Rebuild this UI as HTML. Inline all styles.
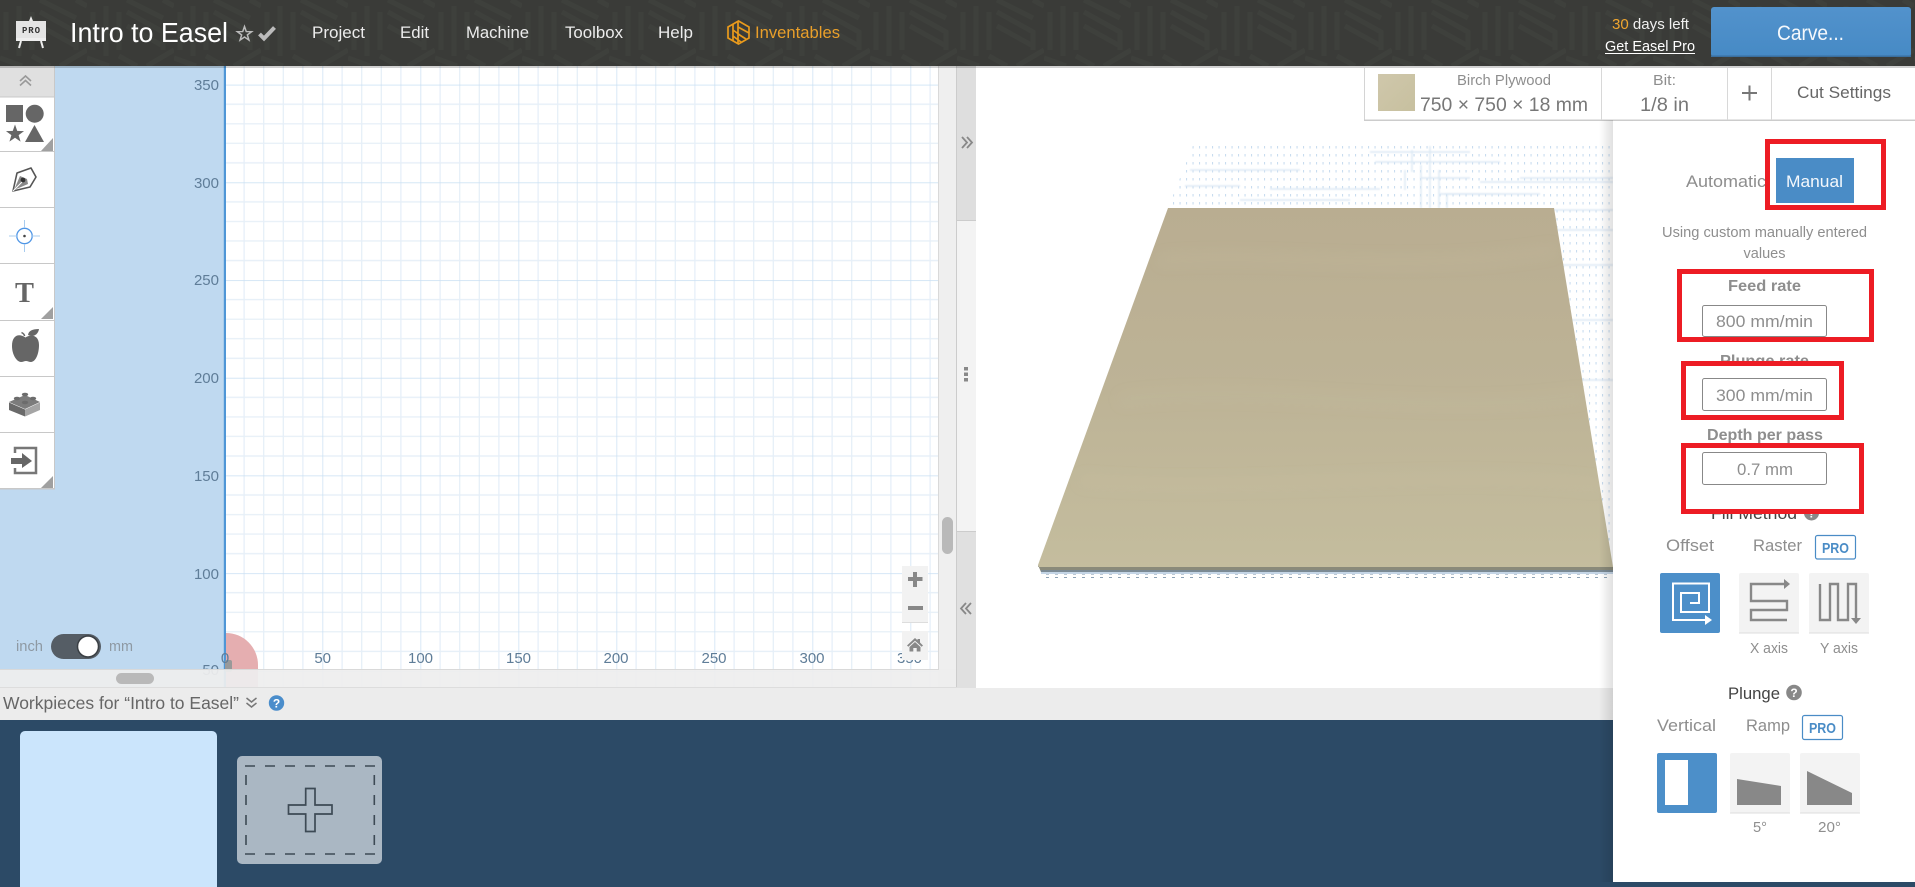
<!DOCTYPE html>
<html><head><meta charset="utf-8"><title>Easel</title>
<style>
html,body{margin:0;padding:0;width:1915px;height:887px;overflow:hidden;background:#fff}
svg{display:block;font-family:"Liberation Sans",sans-serif;filter:blur(.35px)}
.g{fill:#8e8e8e}.d{fill:#4a4a4a}.n{fill:#ececec;font-size:17px}
.b{font-weight:bold}.y{fill:#5f7d98;font-size:15px;text-anchor:end}.x{fill:#5f7d98;font-size:15px;text-anchor:middle}
</style></head><body>
<svg width="1915" height="887" viewBox="0 0 1915 887" xmlns="http://www.w3.org/2000/svg">
<defs>
<pattern id="hd" patternUnits="userSpaceOnUse" width="87" height="66">
<rect width="87" height="66" fill="#3a3b38"/>
<g fill="none" stroke="#3e403c" stroke-width="5">
<path d="M6 12V50M19 6V56M32 12V50M0 58L22 66M40 12L76 32V50M40 26L76 46M40 0L76 18M76 0L87 6M60 66L87 50M32 56L50 66"/>
</g></pattern>
<pattern id="grid" patternUnits="userSpaceOnUse" x="224.5" y="84.7" width="98" height="97.7">
<g stroke="#e6eff8" stroke-width="1.3" fill="none">
<path d="M19.6 0V97.7M39.2 0V97.7M58.8 0V97.7M78.4 0V97.7M0 19.5H98M0 39.1H98M0 58.6H98M0 78.2H98"/>
</g>
<g stroke="#c8dff3" stroke-width="1.4" fill="none"><path d="M0 0V97.7M0 0H98"/></g>
</pattern>
<pattern id="dots" patternUnits="userSpaceOnUse" width="6.500" height="8">
<rect x="3" y="2" width="1.100" height="2.500" fill="#c8dcef"/>
</pattern>
<pattern id="btm" patternUnits="userSpaceOnUse" width="9" height="4">
<rect x="2" y="1" width="3" height="1.600" fill="#8ea3b6"/>
</pattern>
<linearGradient id="wood" x1="0" y1="0" x2="0" y2="1"><stop offset="0" stop-color="#b9ad91"/><stop offset=".5" stop-color="#bdb396"/><stop offset="1" stop-color="#c4bd9e"/></linearGradient>
<linearGradient id="sw" x1="0" y1="0" x2="1" y2="1"><stop offset="0" stop-color="#cfc7ab"/><stop offset="1" stop-color="#c7c09f"/></linearGradient>
<linearGradient id="shd" x1="0" y1="0" x2="1" y2="0"><stop offset="0" stop-color="#000" stop-opacity="0"/><stop offset="1" stop-color="#000" stop-opacity=".12"/></linearGradient>
<linearGradient id="dk" x1="0" y1="0" x2="1" y2="0"><stop offset="0" stop-color="#5a7a98" stop-opacity="0"/><stop offset=".4" stop-color="#5a7a98"/><stop offset=".8" stop-color="#5a7a98"/><stop offset="1" stop-color="#5a7a98" stop-opacity="0"/></linearGradient>
<linearGradient id="btn" x1="0" y1="0" x2="0" y2="1"><stop offset="0" stop-color="#5292cc"/><stop offset="1" stop-color="#468ac5"/></linearGradient>
<filter id="soft" x="-5%" y="-20%" width="110%" height="140%"><feGaussianBlur stdDeviation=".8"/></filter>
<filter id="grain" x="-5%" y="-20%" width="110%" height="140%"><feGaussianBlur stdDeviation="6"/></filter>
</defs>

<!-- canvas left -->
<rect x="0" y="66" width="226" height="621" fill="#bfd9f0"/>
<rect x="226" y="66" width="712" height="621" fill="#fff"/>
<rect x="226" y="66" width="712" height="621" fill="url(#grid)"/>
<rect x="223.800" y="66" width="2.200" height="621" fill="#4f96d6"/>
<path d="M226 633A32 32 0 0 1 258 665V687H226Z" fill="#e5aeb0"/>
<rect x="225" y="660" width="7" height="12" rx="2" fill="#999"/>
<text class="y" x="219" y="90">350</text><text class="y" x="219" y="188">300</text><text class="y" x="219" y="285">250</text><text class="y" x="219" y="383">200</text><text class="y" x="219" y="481">150</text><text class="y" x="219" y="579">100</text><text class="y" x="219" y="675">50</text>
<text class="x" x="225" y="663">0</text><text class="x" x="322.700" y="663">50</text><text class="x" x="420.500" y="663">100</text><text class="x" x="518.500" y="663">150</text><text class="x" x="616" y="663">200</text><text class="x" x="714" y="663">250</text><text class="x" x="812" y="663">300</text><text class="x" x="909.500" y="663">350</text>

<!-- overlays/scroll -->
<rect x="0" y="669" width="957" height="18" fill="#eee" fill-opacity=".93"/>
<rect x="938" y="66" width="19" height="621" fill="#eee" fill-opacity=".93"/>
<rect x="0" y="669" width="938" height="1" fill="#d9d9d9"/>
<rect x="938" y="66" width="1" height="604" fill="#d9d9d9"/>
<rect x="956" y="66" width="1" height="622" fill="#ccc"/>
<rect x="0" y="687" width="957" height="1" fill="#ddd"/>
<rect x="116" y="673" width="38" height="11" rx="5.500" fill="#b9b9b9"/>
<rect x="942" y="517" width="11" height="37" rx="5.500" fill="#b9b9b9"/>

<!-- zoom controls -->
<rect x="902" y="566" width="26" height="57" fill="#f2f2f2"/><rect x="902" y="622" width="26" height="1" fill="#ddd"/>
<rect x="902" y="631" width="26" height="29" fill="#f2f2f2"/>
<path d="M913 572h4v5h5.500v4H917v6h-4v-6H908v-4h5z" fill="#888"/>
<rect x="908" y="606" width="15" height="4" fill="#888"/>
<path d="M907 645.500L915 638l2.500 2.200V639h2.500v3.500l3 3-1.300 1.200-6.700-6-6.700 6zM909.500 647l5.500-5 5.500 5v4.500h-3.800v-3.500h-3.400v3.500h-3.800z" fill="#888"/>

<!-- left toolbar -->
<rect x="0" y="66" width="54" height="423" fill="#fff"/>
<rect x="0" y="66" width="54" height="31" fill="#e0e0e0"/>
<rect x="54" y="66" width="1" height="423" fill="#c8c8c8"/>
<g fill="#c8c8c8"><rect y="96.500" width="54" height="1"/><rect y="151" width="54" height="1"/><rect y="207" width="54" height="1"/><rect y="263" width="54" height="1"/><rect y="320" width="54" height="1"/><rect y="376" width="54" height="1"/><rect y="432" width="54" height="1"/><rect y="488" width="55" height="1.500"/></g>
<path d="M20 81l5.500-5 5.500 5M20 85.500l5.500-5 5.500 5" fill="none" stroke="#999" stroke-width="1.600"/>
<g fill="#666">
<rect x="6" y="105" width="17" height="17"/><circle cx="34.700" cy="113.700" r="9"/>
<path transform="translate(15 134) scale(9.500)" d="M0-1L.235-.324.951-.309.38.124.588.809 0 .4-.588.809-.38.124-.951-.309-.235-.324Z"/>
<path d="M34.500 125L44 142H25Z"/>
</g>
<g fill="#a0a0a0"><path d="M53 138V151H41Z"/><path d="M53 307V319H41Z"/><path d="M53 476V488H41Z"/></g>
<path d="M13 191L17 173L31 168L36 177L30 187Z" fill="none" stroke="#555" stroke-width="1.600" stroke-linejoin="round"/>
<path d="M14 190L20 176L27 179L28 184Z" fill="#888"/><circle cx="23" cy="180" r="2.400" fill="#333"/><path d="M13 191L22 182" stroke="#fff" stroke-width="1"/>
<circle cx="24.500" cy="236" r="7.700" fill="none" stroke="#4f96e6" stroke-width="1.300"/>
<circle cx="24.500" cy="236" r="1.300" fill="#444"/>
<path d="M24.500 220V228M24.500 244V252M9 236H17M32 236H40" stroke="#a8ccef" stroke-width="1"/>
<text x="15" y="302" font-family="Liberation Serif" font-weight="bold" font-size="28" fill="#666" textLength="19" lengthAdjust="spacingAndGlyphs">T</text>
<path d="M25.500 337.500C19 333 12 335 12 346C12 355 17 362 21 362C23 362 24.500 361 26 361C27.500 361 29 362 31 362C35 362 39 355 39 345C39 335 31 334 25.500 337.500Z" fill="#666"/>
<path d="M28 335C28.500 331 32 329 39 329C38 335 33 337.500 28 335Z" fill="#666"/>
<path d="M24.500 336C24.500 334.500 23.500 333.500 21.500 332.500" stroke="#666" stroke-width="1.500" fill="none"/>
<path d="M9 402L25 395L40 402L25 409Z" fill="#7c7c7c"/>
<path d="M9 402.500L25 409.500V416.500L9 410Z" fill="#6a6a6a"/>
<path d="M40 402.500L25 409.500V416.500L40 410Z" fill="#a5a5a5"/>
<g fill="#6c6c6c"><ellipse cx="25" cy="394.500" rx="3.200" ry="1.700"/><ellipse cx="17" cy="398.500" rx="3.200" ry="1.700"/><ellipse cx="33" cy="398.500" rx="3.200" ry="1.700"/><ellipse cx="25" cy="402.500" rx="3.200" ry="1.700"/></g>
<path d="M15 453V448H36V473H15V468" fill="none" stroke="#777" stroke-width="2.500"/>
<path d="M11 458H22V453L32 461L22 468V464H11Z" fill="#666"/>

<!-- unit toggle -->
<rect x="51" y="634" width="50" height="25" rx="12.500" fill="#555d65"/>
<circle cx="88" cy="646.500" r="10.500" fill="#fff" stroke="#3a3f44" stroke-width="1.500"/>
<text x="16" y="651" font-size="14.500" fill="#8e99a3" textLength="27" lengthAdjust="spacingAndGlyphs">inch</text>
<text x="109" y="651" font-size="14.500" fill="#8e99a3" textLength="24" lengthAdjust="spacingAndGlyphs">mm</text>

<!-- middle divider column -->
<rect x="957" y="66" width="19" height="154" fill="#dedede"/>
<rect x="957" y="220" width="19" height="1" fill="#ccc"/>
<rect x="957" y="221" width="19" height="310" fill="#f3f3f3"/>
<rect x="957" y="531" width="19" height="1" fill="#ccc"/>
<rect x="957" y="532" width="19" height="156" fill="#e0e0e0"/>
<path d="M962 137l5 5.500-5 5.500M967 137l5 5.500-5 5.500" fill="none" stroke="#888" stroke-width="1.800"/>
<g fill="#888"><rect x="964" y="367" width="4" height="3.500"/><rect x="964" y="372.500" width="4" height="3.500"/><rect x="964" y="378" width="4" height="3.500"/></g>
<path d="M966 603l-5 5.500 5 5.500M971 603l-5 5.500 5 5.500" fill="none" stroke="#888" stroke-width="1.800"/>

<!-- 3D view -->
<rect x="976" y="66" width="640" height="622" fill="#fff"/>
<path d="M1194 143L1613 143V570L1554 208H1168Z" fill="url(#dots)"/>
<path d="M1241 144H1347" stroke="url(#dk)" stroke-width="1.500"/>
<g stroke="#dbe8f4" stroke-width="1.400" fill="none" filter="url(#soft)">
<path d="M1190 170H1300M1370 152H1470M1375 162H1500M1185 186H1240M1270 189H1380M1420 178H1470M1480 182H1613M1240 200H1350M1440 194H1500M1520 178H1613M1430 210H1613M1240 218H1360M1180 218H1280"/>
<path d="M1445 194H1540M1510 230H1613M1560 265H1613M1570 320H1613M1580 380H1613"/>
<path d="M1430 146V208M1439 170V208M1447 195V208M1421 165V208M1412 150V172M1405 170V190"/>
</g>
<path d="M1168 208H1554L1613 567V570H1041L1038 565Z" fill="url(#wood)"/>
<g fill="none" stroke="#cfc6ac" stroke-opacity=".14" stroke-width="10" filter="url(#grain)">
<path d="M1160 260C1280 250 1400 275 1555 250M1120 400C1260 380 1420 420 1585 395M1080 480C1240 495 1440 465 1600 485"/>
</g>
<path d="M1038 565L1041 572H1613V567H1038Z" fill="#8a8a7a"/>
<rect x="1041" y="570" width="572" height="2" fill="#7b8a94"/>
<rect x="1041" y="572" width="572" height="2" fill="#c4d5e6"/>
<rect x="1040" y="574" width="573" height="4" fill="url(#btm)"/>

<!-- header -->
<rect x="0" y="0" width="1915" height="66" fill="url(#hd)"/>
<rect x="0" y="66" width="1915" height="2" fill="#000" fill-opacity=".18"/>
<path d="M31 16L29 21H33Z" fill="#eee"/>
<rect x="16" y="21" width="30" height="17" fill="#e4e4e4"/>
<text x="22" y="33" font-family="Liberation Mono" font-weight="bold" font-size="9" fill="#333" textLength="18">PRO</text>
<rect x="16" y="38" width="30" height="3" fill="#eee"/>
<path d="M21 41L19 48M41 41L43 48" stroke="#eee" stroke-width="2"/>
<text x="70" y="42" font-size="28" fill="#fff" textLength="158" lengthAdjust="spacingAndGlyphs">Intro to Easel</text>
<path transform="translate(244.500 34) scale(7.500)" d="M0-1L.235-.324.951-.309.38.124.588.809 0 .4-.588.809-.38.124-.951-.309-.235-.324Z" fill="none" stroke="#bbb" stroke-width=".2"/>
<path d="M259.500 34L264 38.500L274.500 27.500" fill="none" stroke="#bbb" stroke-width="4"/>
<text class="n" x="312" y="38" textLength="53" lengthAdjust="spacingAndGlyphs">Project</text>
<text class="n" x="400" y="38" textLength="29" lengthAdjust="spacingAndGlyphs">Edit</text>
<text class="n" x="466" y="38" textLength="63" lengthAdjust="spacingAndGlyphs">Machine</text>
<text class="n" x="565" y="38" textLength="58" lengthAdjust="spacingAndGlyphs">Toolbox</text>
<text class="n" x="658" y="38" textLength="35" lengthAdjust="spacingAndGlyphs">Help</text>
<g fill="none" stroke="#e99a1c" stroke-width="1.700"><path d="M738.500 21L749 27V38L738.500 44L728 38V27Z"/><path d="M733 24V41M738 22V43M733 30L744 38M733 36L741 42M738 27L749 33M738 34L746 39"/></g>
<text x="755" y="38" font-size="17" fill="#e99f2a" textLength="85" lengthAdjust="spacingAndGlyphs">Inventables</text>
<text x="1612" y="29" font-size="15" fill="#f0f0f0" textLength="77" lengthAdjust="spacingAndGlyphs"><tspan fill="#efa52f">30</tspan> days left</text>
<text x="1605" y="51" font-size="15" fill="#fff" textLength="90" lengthAdjust="spacingAndGlyphs">Get Easel Pro</text>
<rect x="1605" y="53" width="90" height="1" fill="#fff"/>
<rect x="1711" y="7" width="200" height="50" rx="3" fill="url(#btn)"/>
<rect x="1711" y="55.500" width="200" height="1.500" fill="#3a6f9f"/>
<text x="1777" y="40" font-size="21" fill="#f4f8fc" textLength="67" lengthAdjust="spacingAndGlyphs">Carve...</text>

<!-- top right toolbar -->
<rect x="1364" y="68" width="551" height="52" fill="#fff"/>
<rect x="1364" y="68" width="1" height="52" fill="#d4d4d4"/>
<rect x="1364" y="119.500" width="551" height="1.500" fill="#ccc"/>
<rect x="1378" y="74" width="37" height="37" fill="url(#sw)"/>
<text x="1457" y="85" font-size="15" class="g" textLength="94" lengthAdjust="spacingAndGlyphs">Birch Plywood</text>
<text x="1420" y="111" font-size="19" fill="#777" textLength="168" lengthAdjust="spacingAndGlyphs">750 × 750 × 18 mm</text>
<rect x="1601" y="68" width="1" height="52" fill="#d8d8d8"/><rect x="1727" y="68" width="1" height="52" fill="#d8d8d8"/><rect x="1771" y="68" width="1" height="52" fill="#d8d8d8"/>
<text x="1653" y="85" font-size="15" class="g" textLength="23" lengthAdjust="spacingAndGlyphs">Bit:</text>
<text x="1640" y="111" font-size="19" fill="#777" textLength="49" lengthAdjust="spacingAndGlyphs">1/8 in</text>
<path d="M1742 93H1757M1749.500 85.500V100.500" stroke="#777" stroke-width="2"/>
<text x="1797" y="98" font-size="17" fill="#666" textLength="94" lengthAdjust="spacingAndGlyphs">Cut Settings</text>

<!-- bottom bar -->
<rect x="0" y="688" width="1915" height="32" fill="#ececec"/>
<rect x="0" y="720" width="1915" height="167" fill="#2c4a66"/>
<text x="3" y="709" font-size="17.500" fill="#666" textLength="236" lengthAdjust="spacingAndGlyphs">Workpieces for “Intro to Easel”</text>
<path d="M246.500 698l5 4 5-4M246.500 703l5 4 5-4" fill="none" stroke="#777" stroke-width="1.500"/>
<circle cx="276.500" cy="703" r="7.700" fill="#4a8dcb"/>
<text x="276.500" y="707.500" font-size="12" font-weight="bold" fill="#fff" text-anchor="middle">?</text>
<rect x="20" y="731" width="197" height="170" rx="5" fill="#cbe5fc"/>
<rect x="237" y="756" width="145" height="108" rx="5" fill="#aab7c3"/>
<path d="M245 766H375M245 854H375" fill="none" stroke="#3d4a55" stroke-width="1.600" stroke-dasharray="10 10"/>
<path d="M246 775V846M374.300 775V846" fill="none" stroke="#3d4a55" stroke-width="1.600" stroke-dasharray="10 10"/>
<path d="M305.700 788.500H315V805H332V814H315V831.500H305.700V814H288.500V805H305.700Z" fill="none" stroke="#3d4a55" stroke-width="1.700"/>

<!-- panel -->
<rect x="1599" y="120" width="14" height="762" fill="url(#shd)"/>
<rect x="1613" y="120" width="302" height="762" fill="#fff"/>
<rect x="1613" y="120" width="302" height="1" fill="#ccc"/>

<text x="1686" y="187" font-size="17" class="g" textLength="80" lengthAdjust="spacingAndGlyphs">Automatic</text>
<rect x="1767.500" y="141.500" width="116" height="66" fill="#fff" stroke="#ed1c24" stroke-width="5"/>
<rect x="1776" y="158" width="78" height="45" fill="#4a8cc6"/>
<text x="1786" y="187" font-size="17" fill="#f4f8fc" textLength="57" lengthAdjust="spacingAndGlyphs">Manual</text>
<text x="1662" y="237" font-size="14.500" class="g" textLength="205" lengthAdjust="spacingAndGlyphs">Using custom manually entered</text>
<text x="1743.500" y="258" font-size="14.500" class="g" textLength="42" lengthAdjust="spacingAndGlyphs">values</text>

<rect x="1679.500" y="271.500" width="192" height="68" fill="#fff" stroke="#ed1c24" stroke-width="5"/>
<text x="1728" y="291" font-size="16" class="g b" textLength="73" lengthAdjust="spacingAndGlyphs">Feed rate</text>
<rect x="1702.500" y="305.500" width="124" height="31" rx="2" fill="#fff" stroke="#888"/>
<text x="1716" y="327" font-size="16.500" class="g" textLength="97" lengthAdjust="spacingAndGlyphs">800 mm/min</text>

<text x="1720" y="366" font-size="16" class="g b" textLength="89" lengthAdjust="spacingAndGlyphs">Plunge rate</text>
<rect x="1683.500" y="363.500" width="158" height="54" fill="#fff" stroke="#ed1c24" stroke-width="5"/>
<rect x="1702.500" y="378.500" width="124" height="32" rx="2" fill="#fff" stroke="#888"/>
<text x="1716" y="401" font-size="16.500" class="g" textLength="97" lengthAdjust="spacingAndGlyphs">300 mm/min</text>

<text x="1707" y="440" font-size="16" class="g b" textLength="116" lengthAdjust="spacingAndGlyphs">Depth per pass</text>

<text x="1711" y="519" font-size="17" fill="#444" textLength="86" lengthAdjust="spacingAndGlyphs">Fill Method</text>
<circle cx="1811.500" cy="513" r="7.500" fill="#888"/>
<text x="1811.500" y="517.500" font-size="12" font-weight="bold" fill="#fff" text-anchor="middle">?</text>
<rect x="1683.500" y="445.500" width="178" height="66" fill="#fff" stroke="#ed1c24" stroke-width="5"/>
<rect x="1702.500" y="452.500" width="124" height="32" rx="2" fill="#fff" stroke="#888"/>
<text x="1737" y="475" font-size="16.500" class="g" textLength="56" lengthAdjust="spacingAndGlyphs">0.7 mm</text>

<text x="1666" y="551" font-size="16.500" class="g" textLength="48" lengthAdjust="spacingAndGlyphs">Offset</text>
<text x="1753" y="551" font-size="16.500" class="g" textLength="49" lengthAdjust="spacingAndGlyphs">Raster</text>
<rect x="1815.500" y="535.500" width="40" height="23.500" rx="2" fill="#fff" stroke="#4a8cc6" stroke-width="1.200"/>
<text x="1822" y="553" font-size="15" font-weight="bold" fill="#4a8cc6" textLength="27" lengthAdjust="spacingAndGlyphs">PRO</text>

<rect x="1660" y="573" width="60" height="60" rx="2" fill="#4c8fc9"/>
<path d="M1705 620H1673V583.500H1709V612H1681V593H1699V603H1690" fill="none" stroke="#fff" stroke-width="2"/>
<path d="M1705 615L1712 620L1705 625Z" fill="#fff"/>
<rect x="1739" y="573" width="60" height="60" rx="2" fill="#f3f3f3"/>
<rect x="1739" y="632.500" width="60" height="1" fill="#ddd"/>
<path d="M1784 584H1751V601H1787V610H1751V620H1787" fill="none" stroke="#888" stroke-width="2.400"/>
<path d="M1784 579L1790 584L1784 589Z" fill="#888"/>
<rect x="1809" y="573" width="60" height="60" rx="2" fill="#f3f3f3"/>
<rect x="1809" y="632.500" width="60" height="1" fill="#ddd"/>
<path d="M1820 584V620H1830V584H1838V620H1848V584H1856V618" fill="none" stroke="#888" stroke-width="2.400"/>
<path d="M1851 618H1861L1856 624Z" fill="#888"/>
<text x="1750" y="653" font-size="14.500" class="g" textLength="38" lengthAdjust="spacingAndGlyphs">X axis</text>
<text x="1820" y="653" font-size="14.500" class="g" textLength="38" lengthAdjust="spacingAndGlyphs">Y axis</text>

<text x="1728" y="699" font-size="17" fill="#444" textLength="52" lengthAdjust="spacingAndGlyphs">Plunge</text>
<circle cx="1794" cy="692.500" r="7.800" fill="#888"/>
<text x="1794" y="697" font-size="12" font-weight="bold" fill="#fff" text-anchor="middle">?</text>
<text x="1657" y="731" font-size="16.500" class="g" textLength="59" lengthAdjust="spacingAndGlyphs">Vertical</text>
<text x="1746" y="731" font-size="16.500" class="g" textLength="44" lengthAdjust="spacingAndGlyphs">Ramp</text>
<rect x="1802.500" y="715.500" width="40" height="24" rx="2" fill="#fff" stroke="#4a8cc6" stroke-width="1.200"/>
<text x="1809" y="733" font-size="15" font-weight="bold" fill="#4a8cc6" textLength="27" lengthAdjust="spacingAndGlyphs">PRO</text>

<rect x="1657" y="753" width="60" height="60" rx="2" fill="#4c8fc9"/>
<rect x="1665" y="760" width="23" height="45" fill="#fff"/>
<rect x="1730" y="753" width="60" height="60" rx="2" fill="#f3f3f3"/><rect x="1730" y="812.500" width="60" height="1" fill="#ddd"/>
<path d="M1737 779L1781 786V805H1737Z" fill="#888"/>
<rect x="1800" y="753" width="60" height="60" rx="2" fill="#f3f3f3"/><rect x="1800" y="812.500" width="60" height="1" fill="#ddd"/>
<path d="M1807 771L1852 793V805H1807Z" fill="#888"/>
<text x="1753" y="832" font-size="14.500" class="g" textLength="14" lengthAdjust="spacingAndGlyphs">5°</text>
<text x="1818" y="832" font-size="14.500" class="g" textLength="23" lengthAdjust="spacingAndGlyphs">20°</text>
</svg>
</body></html>
